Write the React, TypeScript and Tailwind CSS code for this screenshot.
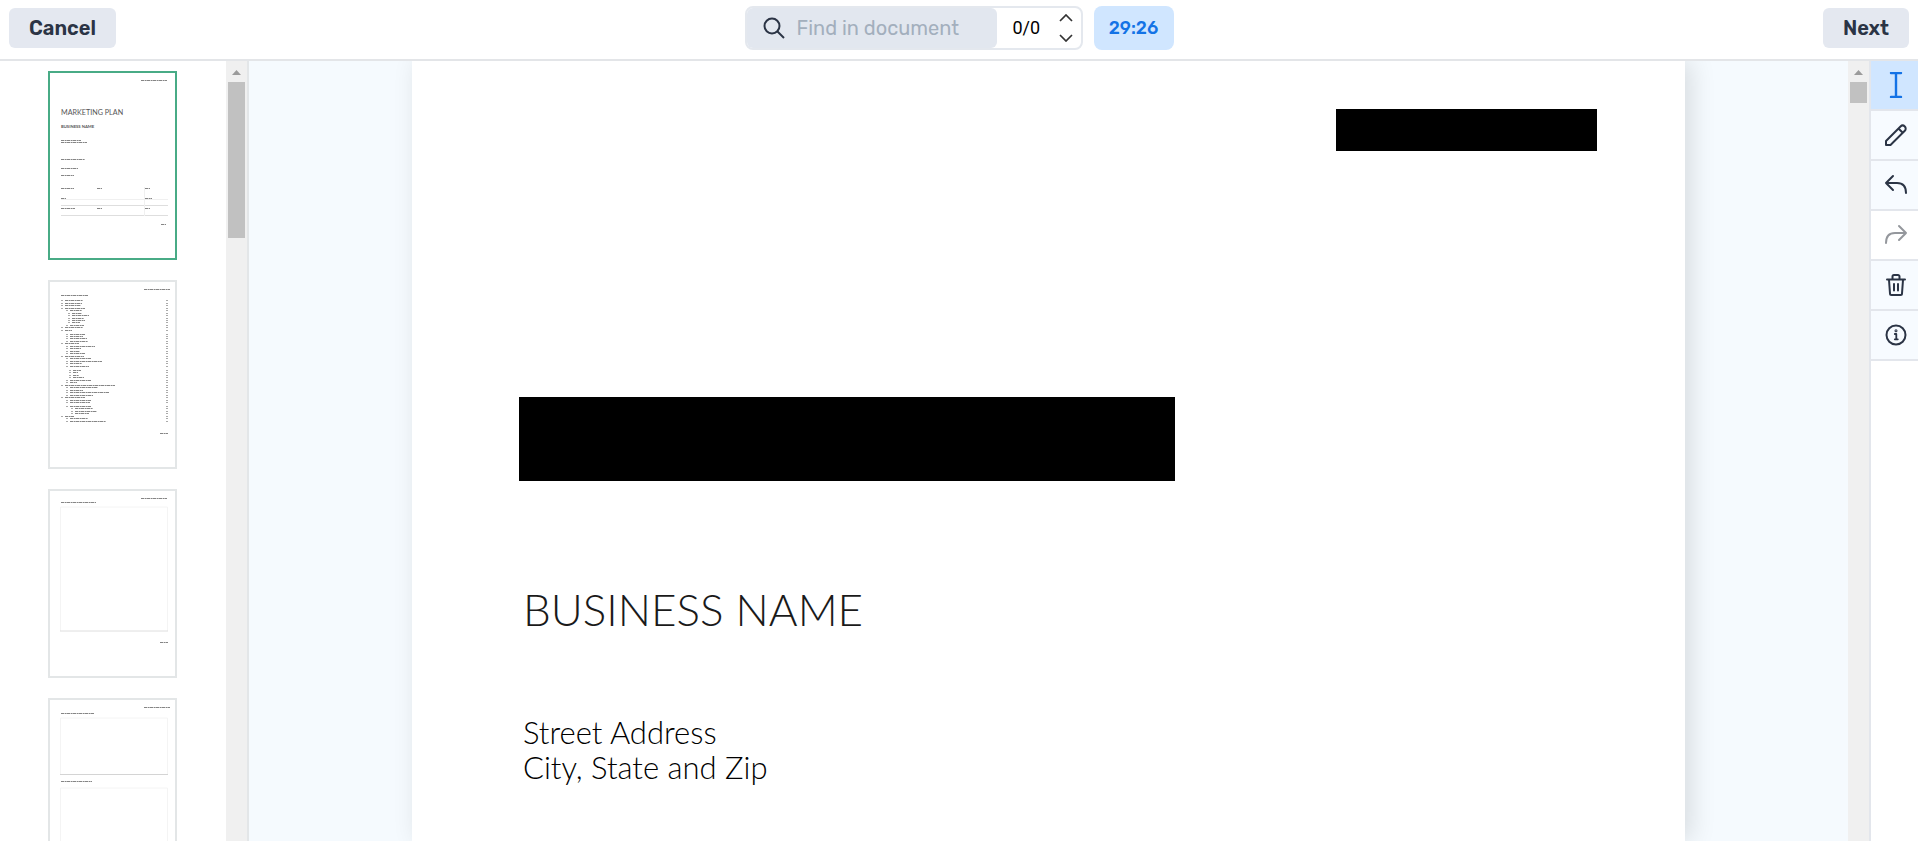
import { useState } from "react";

type Line = [x: number, y: number, w: number];

const tocLines: Line[] = [
  [15, 18, 18], [15, 21, 17], [15, 23, 16], [15, 26, 20], [20, 28, 12], [22, 31, 10], [22, 33, 17],
  [22, 36, 12], [22, 38, 13], [22, 40, 8], [20, 43, 14], [15, 45, 18], [15, 48, 7], [20, 52, 15],
  [20, 54, 13], [20, 56, 17], [20, 59, 18], [15, 61, 14], [20, 64, 25], [20, 66, 11], [20, 69, 10],
  [20, 71, 15], [15, 74, 19], [20, 76, 21], [20, 79, 32], [20, 81, 12], [20, 84, 19], [23, 88, 8],
  [23, 90, 5], [23, 93, 6], [23, 95, 11], [20, 98, 21], [20, 100, 7], [15, 103, 50], [20, 105, 28],
  [20, 108, 13], [20, 110, 39], [20, 113, 23], [15, 115, 20], [20, 118, 21], [20, 120, 20],
  [20, 124, 21], [25, 126, 18], [25, 129, 22], [25, 131, 14], [15, 134, 9], [20, 136, 18],
  [20, 139, 36],
];

const TextLine = ({ line }: { line: Line }) => {
  const [x, y, w] = line;
  return (
    <line
      x1={x}
      y1={y + 0.5}
      x2={x + w}
      y2={y + 0.5}
      stroke="#858585"
      strokeWidth="1.2"
      strokeDasharray="3 0.6 2 0.4"
    />
  );
};

const CoverPreview = () => (
  <svg viewBox="0 0 125 185" className="block w-full" fontFamily="Lato, sans-serif">
    <TextLine line={[91, 7, 26]} />
    <text x="11" y="42" fontSize="7.2" fill="#555">
      MARKETING PLAN
    </text>
    <text x="11" y="55" fontSize="4.2" fontWeight="700" fill="#555">
      BUSINESS NAME
    </text>
    {(
      [
        [11, 67, 20], [11, 69, 26], [11, 86, 24], [11, 95, 17], [11, 102, 13],
        [11, 115, 13], [47, 115, 5], [95, 115, 5], [11, 125, 5], [95, 125, 7],
        [11, 135, 14], [47, 135, 5], [95, 135, 5], [111, 151, 5],
      ] as Line[]
    ).map((l) => (
      <TextLine key={l.join()} line={l} />
    ))}
    <path d="M11 126.500H118" stroke="#f0f0f0" />
    <path d="M11 132.500H118M11 142.500H118" stroke="#dedede" />
    <path d="M94.500 114V143" stroke="#f0f0f0" />
  </svg>
);

const TocPreview = () => (
  <svg viewBox="0 0 125 185" className="block w-full">
    <TextLine line={[94, 7, 26]} />
    <TextLine line={[11, 13, 27]} />
    {tocLines.map(([x, y, w]) => (
      <g key={y}>
        <TextLine line={[x, y, w]} />
        <path d={`M${x - 4} ${y + 0.5}h2M116 ${y + 0.5}h2`} stroke="#aaa" />
      </g>
    ))}
    <TextLine line={[110, 151, 8]} />
  </svg>
);

const SummaryPreview = () => (
  <svg viewBox="0 0 125 185" className="block w-full">
    <TextLine line={[91, 7, 26]} />
    <TextLine line={[11, 11, 35]} />
    <path d="M10.500 140V16H117.500V140" fill="none" stroke="#f4f4f4" />
    <path d="M10 140H118" stroke="#dedede" />
    <TextLine line={[110, 151, 8]} />
  </svg>
);

const MissionPreview = () => (
  <svg viewBox="0 0 125 185" className="block w-full">
    <TextLine line={[94, 7, 26]} />
    <TextLine line={[11, 13, 33]} />
    <path d="M10.500 74V18H117.500V74M10.500 185V88H117.500V185" fill="none" stroke="#f4f4f4" />
    <path d="M10 74.500H118" stroke="#d4d4d4" />
    <TextLine line={[11, 81, 31]} />
  </svg>
);

const thumbnails = [CoverPreview, TocPreview, SummaryPreview, MissionPreview];

const tools = [
  {
    name: "Select text",
    icon: <path d="M7 1h10M7 25h10M12 1v24" strokeWidth="2.400" />,
  },
  {
    name: "Draw",
    icon: <path d="M2 23v-4L16.500 4.500a3 3 0 0 1 4.300 4.300L6.500 23zM14.500 6.500l4.200 4.200" />,
  },
  {
    name: "Undo",
    icon: <path d="M9 4L2 11l7 7M2 11h11c5.500 0 9 3.500 9 10" />,
  },
  {
    name: "Redo",
    icon: <path d="M15 4l7 7-7 7M22 11H11c-5.500 0-9 3.500-9 10" />,
  },
  {
    name: "Delete",
    icon: <path d="M3 7.500h18M8.500 7V4.500A1.500 1.500 0 0 1 10 3h4a1.500 1.500 0 0 1 1.500 1.500V7M5 8l1 13.500a1.500 1.500 0 0 0 1.500 1.500h9a1.500 1.500 0 0 0 1.500-1.500L19 8M10 12v6.500M14 12v6.500" />,
  },
  {
    name: "Info",
    icon: (
      <>
        <circle cx="12" cy="13" r="9.500" />
        <path d="M10.800 12h1.500v5M10.800 17.300h3" strokeWidth="1.800" />
        <circle cx="12" cy="8.700" r="0.500" />
      </>
    ),
  },
];

const ScrollBar = ({ thumb }: { thumb: string }) => (
  <div className="flex w-[21px] shrink-0 flex-col items-center bg-[#f0f0f0]">
    <svg width="9" height="5" viewBox="0 0 9 5" className="mt-[9px] mb-[7px] shrink-0">
      <path d="M4.500 0L9 5H0z" fill="#9b9b9b" />
    </svg>
    <div className={`w-[17px] shrink-0 bg-[#c1c1c1] ${thumb}`} />
  </div>
);

const App = () => {
  const [page, setPage] = useState<number>(0);
  const [tool, setTool] = useState<string>("Select text");
  const [query, setQuery] = useState<string>("");

  return (
    <div className="flex h-screen flex-col overflow-hidden bg-white font-[Rubik,Inter,sans-serif] text-[#2b3445]">
      <header className="flex h-[61px] shrink-0 items-center justify-between border-b-2 border-[#e3e5e8] px-[9px] pb-[3px]">
        <div className="flex flex-1">
          <button className="h-10 rounded-md bg-[#e4e8f0] px-5 text-xl font-semibold">
            Cancel
          </button>
        </div>
        <div className="flex items-center gap-[11px]">
          <div className="flex h-11 w-[338px] rounded-lg border-2 border-[#e4e8ee] bg-white">
            <label className="flex w-[250px] items-center gap-3 rounded-md bg-[#e2e7ef] pl-4">
              <svg width="22" height="22" viewBox="0 0 22 22" fill="none" stroke="#2b3445" strokeWidth="2">
                <circle cx="9" cy="9" r="7.500" />
                <path d="M14.500 14.500L21 21" />
              </svg>
              <input
                aria-label="Find in document"
                className="w-[180px] bg-transparent text-xl outline-none placeholder:text-[#a3afbd]"
                placeholder="Find in document"
                value={query}
                onChange={(e) => setQuery(e.target.value)}
              />
            </label>
            <span className="flex flex-1 items-center pl-4 font-[Roboto,sans-serif] text-lg text-black">
              0/0
            </span>
            <div className="flex w-[22px] flex-col justify-between py-[6px]">
              <button aria-label="Previous match">
                <svg width="14" height="8" viewBox="0 0 14 8" fill="none" stroke="#333" strokeWidth="1.700">
                  <path d="M1 7l6-6 6 6" />
                </svg>
              </button>
              <button aria-label="Next match">
                <svg width="14" height="8" viewBox="0 0 14 8" fill="none" stroke="#333" strokeWidth="1.700">
                  <path d="M1 1l6 6 6-6" />
                </svg>
              </button>
            </div>
          </div>
          <div className="flex h-11 w-20 items-center justify-center rounded-lg bg-[#d0e6ff] text-lg font-medium text-[#1473e6]">
            29:26
          </div>
        </div>
        <div className="flex flex-1 justify-end">
          <button className="h-10 rounded-md bg-[#e4e8f0] px-5 text-xl font-semibold">
            Next
          </button>
        </div>
      </header>

      <div className="flex min-h-0 flex-1">
        <aside className="flex w-[249px] shrink-0 border-r-2 border-[#e3e6e8]">
          <div className="flex flex-1 flex-col items-center gap-5 overflow-hidden pt-[10px] pr-[1px]">
            {thumbnails.map((Preview, i) => (
              <button
                key={i}
                aria-label={`Page ${i + 1}`}
                onClick={() => setPage(i)}
                className={`w-[129px] shrink-0 border-2 bg-white ${
                  page === i ? "border-[#48ab86]" : "border-[#e3e6e7]"
                }`}
              >
                <Preview />
              </button>
            ))}
          </div>
          <ScrollBar thumb="h-[156px]" />
        </aside>

        <main className="flex min-w-0 flex-1 overflow-hidden bg-[#f5fafe] pl-[163px]">
          <article className="flex flex-1 flex-col bg-white px-[107px] pt-12 font-['Century_Gothic','URW_Gothic',Lato,sans-serif] font-light text-[#1a1a1a] shadow-[6px_0_24px_rgba(0,0,0,0.12)]">
            <div className="mr-[-19px] h-[42px] w-[261px] shrink-0 self-end bg-black" />
            <div className="mt-[246px] h-[84px] w-[656px] shrink-0 bg-black" />
            <h1 className="mt-[99px] pl-1 text-[44px] leading-[58px]">BUSINESS NAME</h1>
            <p className="mt-[77px] pl-1 text-[31px] leading-[35px] text-black">
              Street Address
              <br />
              City, State and Zip
            </p>
          </article>
          <div className="w-[163px] shrink-0" />
          <ScrollBar thumb="h-[21px]" />
        </main>

        <nav className="w-[49px] shrink-0 border-l-2 border-[#e3e6ec]">
          {tools.map(({ name, icon }) => (
            <button
              key={name}
              aria-label={name}
              disabled={name === "Redo"}
              onClick={() => setTool(name)}
              className={`flex h-[50px] w-full items-center justify-center border-b-2 border-[#e3e6ec] pl-[3px] disabled:bg-white disabled:text-[#94979c] ${
                tool === name ? "bg-[#d0e6ff] text-[#1473e6]" : "bg-[#f7fbff] text-[#2b3445]"
              }`}
            >
              <svg
                width="24"
                height="26"
                viewBox="0 0 24 26"
                fill="none"
                stroke="currentColor"
                strokeWidth="2"
                strokeLinecap="round"
                strokeLinejoin="round"
              >
                {icon}
              </svg>
            </button>
          ))}
        </nav>
      </div>
    </div>
  );
};

export default App;
